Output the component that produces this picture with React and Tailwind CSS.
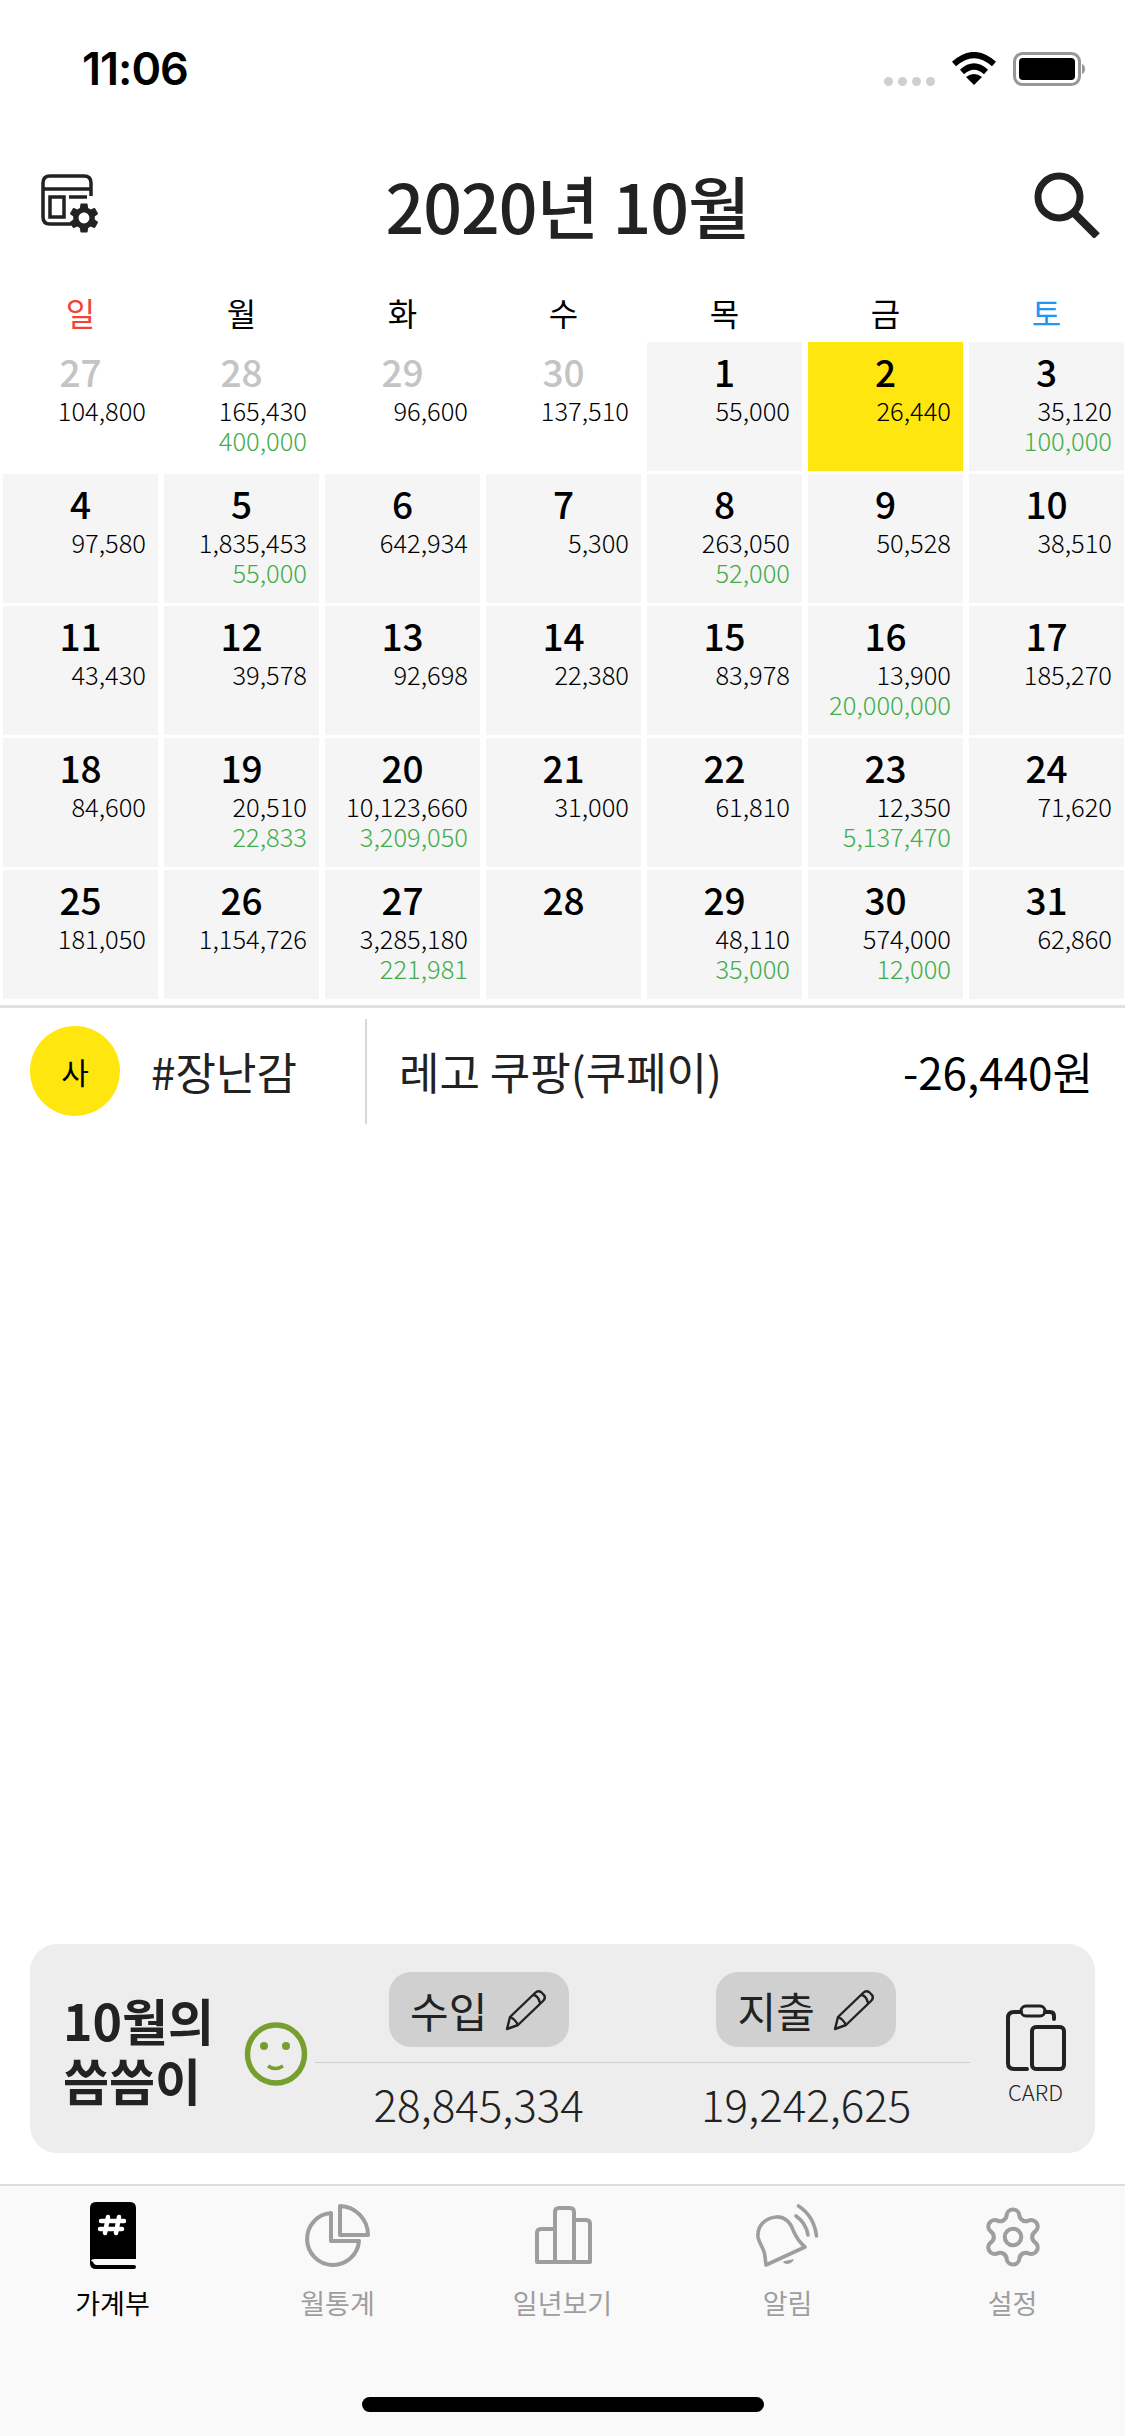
import React from "react";
import { Settings } from "lucide-react";

const weeks = [
  [
    { d: 27, a: "104,800", off: true },
    { d: 28, a: "165,430", i: "400,000", off: true },
    { d: 29, a: "96,600", off: true },
    { d: 30, a: "137,510", off: true },
    { d: 1, a: "55,000" },
    { d: 2, a: "26,440", on: true },
    { d: 3, a: "35,120", i: "100,000" },
  ],
  [
    { d: 4, a: "97,580" },
    { d: 5, a: "1,835,453", i: "55,000" },
    { d: 6, a: "642,934" },
    { d: 7, a: "5,300" },
    { d: 8, a: "263,050", i: "52,000" },
    { d: 9, a: "50,528" },
    { d: 10, a: "38,510" },
  ],
  [
    { d: 11, a: "43,430" },
    { d: 12, a: "39,578" },
    { d: 13, a: "92,698" },
    { d: 14, a: "22,380" },
    { d: 15, a: "83,978" },
    { d: 16, a: "13,900", i: "20,000,000" },
    { d: 17, a: "185,270" },
  ],
  [
    { d: 18, a: "84,600" },
    { d: 19, a: "20,510", i: "22,833" },
    { d: 20, a: "10,123,660", i: "3,209,050" },
    { d: 21, a: "31,000" },
    { d: 22, a: "61,810" },
    { d: 23, a: "12,350", i: "5,137,470" },
    { d: 24, a: "71,620" },
  ],
  [
    { d: 25, a: "181,050" },
    { d: 26, a: "1,154,726" },
    { d: 27, a: "3,285,180", i: "221,981" },
    { d: 28 },
    { d: 29, a: "48,110", i: "35,000" },
    { d: 30, a: "574,000", i: "12,000" },
    { d: 31, a: "62,860" },
  ],
];

const days = [
  { t: "일", c: "text-[#f44336]" },
  { t: "월", c: "text-black" },
  { t: "화", c: "text-black" },
  { t: "수", c: "text-black" },
  { t: "목", c: "text-black" },
  { t: "금", c: "text-black" },
  { t: "토", c: "text-[#2196f3]" },
];

function GearSetIcon() {
  return (
    <svg width="60" height="62" viewBox="0 0 60 62" fill="none" stroke="#222" strokeWidth="3.5">
      <path d="M34 50 H9 Q2 50 2 43 V9 Q2 2 9 2 H43 Q50 2 50 9 V22" />
      <path d="M2 15 H50" />
      <path d="M28 23 H46" />
      <rect x="9" y="23" width="14" height="20" />
      <svg x="25" y="26" width="36" height="36" viewBox="0 0 24 24">
        <path
          fill="#222"
          stroke="none"
          d="M19.14 12.94c.04-.3.06-.61.06-.94 0-.32-.02-.64-.07-.94l2.03-1.58c.18-.14.23-.41.12-.61l-1.92-3.32c-.12-.22-.37-.29-.59-.22l-2.39.96c-.5-.38-1.03-.7-1.62-.94l-.36-2.54c-.04-.24-.24-.41-.48-.41h-3.84c-.24 0-.43.17-.47.41l-.36 2.54c-.59.24-1.13.57-1.62.94l-2.39-.96c-.22-.08-.47 0-.59.22L2.74 8.87c-.12.21-.08.47.12.61l2.03 1.58c-.05.3-.09.63-.09.94s.02.64.07.94l-2.03 1.58c-.18.14-.23.41-.12.61l1.92 3.32c.12.22.37.29.59.22l2.39-.96c.5.38 1.03.7 1.62.94l.36 2.54c.05.24.24.41.48.41h3.84c.24 0 .44-.17.47-.41l.36-2.54c.59-.24 1.13-.56 1.62-.94l2.39.96c.22.08.47 0 .59-.22l1.92-3.32c.12-.22.07-.47-.12-.61l-2.01-1.58zM12 15.6c-1.98 0-3.6-1.62-3.6-3.6s1.62-3.6 3.6-3.6 3.6 1.62 3.6 3.6-1.62 3.6-3.6 3.6z"
        />
      </svg>
    </svg>
  );
}

function PencilIcon() {
  return (
    <svg width="42" height="42" viewBox="0 0 42 42" fill="none" stroke="#222" strokeWidth="2.4" strokeLinejoin="round">
      <path d="M2 40 L5 28 L30 4 Q33 1 36 3 L39 6 Q41 9 38 12 L13 36 Z" />
      <path d="M28 6 Q33 6 35 14" />
      <path d="M5 28 Q10 30 13 36" />
    </svg>
  );
}

function CardIcon() {
  return (
    <svg width="60" height="68" viewBox="0 0 60 68" fill="none" stroke="#222" strokeWidth="4" strokeLinecap="round">
      <rect x="26" y="24" width="32" height="42" rx="4" />
      <path d="M48 16 V13 Q48 9 44 9 H39" />
      <path d="M15 9 H8 Q2 9 2 15 V60 Q2 66 8 66 H21" />
      <rect x="15" y="3" width="24" height="10" rx="5" strokeWidth="3" />
    </svg>
  );
}

const gray = "#9e9e9e";

function BookIcon() {
  return (
    <svg width="70" height="70" viewBox="0 0 70 70">
      <path d="M20 0 H52 Q58 0 58 6 V57 H17 Q12 57 12 62 V6 Q12 0 18 0 Z" fill="#000" />
      <path d="M12 58 V61 Q12 67 18 67 H56 Q58 67 58 65 Q58 63 56 63 H18 Q16 63 15 60 Z" fill="#000" />
      <path d="M30 15 L27 31 M41 15 L38 31 M23 19 H46 M22 27 H44" stroke="#fff" strokeWidth="4.5" strokeLinecap="round" fill="none" />
    </svg>
  );
}

function PieIcon() {
  return (
    <svg width="70" height="70" viewBox="0 0 70 70" fill="none" stroke={gray} strokeWidth="4" strokeLinejoin="round">
      <path d="M28 11 A26 26 0 1 0 56 39 H28 Z" />
      <path d="M37 4 V33 H65 A29 29 0 0 0 37 4 Z" />
    </svg>
  );
}

function BarsIcon() {
  return (
    <svg width="70" height="70" viewBox="0 0 70 70" fill="none" stroke={gray} strokeWidth="4" strokeLinejoin="round">
      <path d="M9 60 V31 Q9 27 13 27 H27 V60 Z" />
      <path d="M27 60 V10 Q27 6 31 6 H42 Q46 6 46 10 V60 Z" />
      <path d="M46 18 H58 Q62 18 62 22 V60 H46" />
      <path d="M9 60 H62" />
    </svg>
  );
}

function BellIcon() {
  return (
    <svg width="70" height="70" viewBox="0 0 70 70" fill="none" stroke={gray} strokeWidth="3.6" strokeLinecap="round" strokeLinejoin="round">
      <path d="M13 63 L52 45 C46 40 43 35 40 28 C37 19 30 14 23 15 C12 16 4 24 5 35 C6 42 12 47 12 55 Z" />
      <path d="M31 60 Q36 63 40 58 Z" fill={gray} strokeWidth="1.5" />
      <path d="M43 14 Q53 21 55 33" />
      <path d="M45.5 4 Q61 14 63.5 34" />
    </svg>
  );
}

const tabs = [
  { label: "가계부", Icon: BookIcon, on: true },
  { label: "월통계", Icon: PieIcon },
  { label: "일년보기", Icon: BarsIcon },
  { label: "알림", Icon: BellIcon },
  {
    label: "설정",
    Icon: () => (
      <div className="w-[70px] h-[70px] flex items-center justify-center">
        <Settings size={66} color={gray} strokeWidth={1.5} />
      </div>
    ),
  },
];

function Cell({ cell }) {
  let bg = "bg-[#f5f5f5]";
  if (cell.off) bg = "bg-white";
  if (cell.on) bg = "bg-[#ffe60f]";

  return (
    <div className={`h-[129px] flex flex-col pt-[9px] ${bg}`}>
      <div className={`text-center text-[37px] leading-[40px] font-medium ${cell.off ? "text-[#c4c4c4]" : "text-black"}`}>
        {cell.d}
      </div>
      <div className="mt-[4px] pr-[12px] text-right text-[25.5px] leading-[30px] font-light text-black">{cell.a}</div>
      {cell.i && <div className="pr-[12px] text-right text-[25.5px] leading-[30px] font-light text-[#43ad4b]">{cell.i}</div>}
    </div>
  );
}

function Summary({ label, value }) {
  return (
    <div className="flex flex-col items-center w-[328px]">
      <div className="w-[180px] h-[75px] rounded-[22px] bg-[#d0d0d0] flex items-center justify-center gap-[18px] text-[#222] text-[42px] leading-none">
        <span>{label}</span>
        <PencilIcon />
      </div>
    </div>
  );
}

export default function App() {
  return (
    <div className="w-[1125px] h-[2436px] bg-white flex flex-col font-['Noto_Sans_CJK_KR','Noto_Sans',sans-serif] overflow-hidden">
      {/* status bar */}
      <div className="h-[150px] shrink-0 flex items-start justify-between pt-[44px] pl-[82px] pr-[40px]">
        <div className="font-['Inter',sans-serif] font-semibold text-[45px] leading-[50px] text-black tracking-[-1px]">11:06</div>
        <div className="flex items-center gap-[16px] pt-[8px]">
          <div className="flex items-center gap-[5px] mt-[24px]">
            <span className="w-[9px] h-[9px] rounded-full bg-[#cfcfcf]" />
            <span className="w-[9px] h-[9px] rounded-full bg-[#cfcfcf]" />
            <span className="w-[9px] h-[9px] rounded-full bg-[#cfcfcf]" />
            <span className="w-[9px] h-[9px] rounded-full bg-[#cfcfcf]" />
          </div>
          <svg width="46" height="34" viewBox="0 0 46 34" fill="none" stroke="#000" strokeWidth="6">
            <path d="M3 12 Q23 -6 43 12" />
            <path d="M11 20 Q23 9 35 20" />
            <path d="M23 33 L15 25 Q23 19 31 25 Z" fill="#000" stroke="none" />
          </svg>
          <svg width="72" height="34" viewBox="0 0 72 34" fill="none">
            <rect x="1.5" y="1.5" width="65" height="31" rx="8" stroke="#979797" strokeWidth="3" />
            <rect x="6" y="6" width="56" height="22" rx="4" fill="#000" />
            <path d="M69 12 Q72 13 72 17 Q72 21 69 22 Z" fill="#979797" />
          </svg>
        </div>
      </div>

      {/* header */}
      <div className="h-[110px] shrink-0 flex items-center justify-between pl-[41px] pr-[25px]">
        <GearSetIcon />
        <div className="text-[68px] leading-none font-medium text-[#222] tracking-[-1px]">2020년 10월</div>
        <svg width="66" height="66" viewBox="0 0 66 66" fill="none" stroke="#222" strokeWidth="7">
          <circle cx="25" cy="25" r="21" />
          <path d="M40 41 L63 64" strokeWidth="8" />
        </svg>
      </div>

      {/* weekdays */}
      <div className="h-[82px] shrink-0 pt-[22px] pl-[3px] pr-[1px] grid grid-cols-7 gap-x-[6px]">
        {days.map((day) => (
          <div key={day.t} className={`flex items-center justify-center text-[32px] leading-none ${day.c}`}>
            {day.t}
          </div>
        ))}
      </div>

      {/* calendar */}
      <div className="shrink-0 pl-[3px] pr-[1px] grid grid-cols-7 gap-x-[6px] gap-y-[3px]">
        {weeks.flat().map((cell, idx) => (
          <Cell key={idx} cell={cell} />
        ))}
      </div>

      {/* selected day */}
      <div className="mt-[6px] border-t-[3px] border-[#e2e2e2] h-[129px] shrink-0 flex items-center pl-[30px] pr-[32px]">
        <div className="w-[90px] h-[90px] rounded-full bg-[#ffe60f] flex items-center justify-center text-[30px] text-black">사</div>
        <div className="ml-[31px] w-[214px] text-[44px] leading-none text-[#222]">#장난감</div>
        <div className="w-[2px] h-[105px] bg-[#d8d8d8]" />
        <div className="ml-[32px] flex-1 text-[44px] leading-none text-[#222]">레고 쿠팡(쿠페이)</div>
        <div className="text-[44px] leading-none text-black">-26,440원</div>
      </div>

      <div className="flex-1" />

      {/* monthly summary */}
      <div className="mx-[30px] mb-[31px] h-[209px] shrink-0 rounded-[27px] bg-[#ededed] flex">
        <div className="w-[285px] pl-[33px] flex items-center gap-[30px]">
          <div className="text-[50px] leading-[60px] font-bold text-[#222] whitespace-nowrap">
            10월의
            <br />
            씀씀이
          </div>
          <svg className="mt-[10px] shrink-0" width="64" height="64" viewBox="0 0 64 64" fill="none" stroke="#779f2f" strokeWidth="5.5">
            <ellipse cx="32" cy="32" rx="28.5" ry="29" />
            <circle cx="20" cy="24" r="4" fill="#779f2f" stroke="none" />
            <circle cx="42" cy="24" r="4" fill="#779f2f" stroke="none" />
            <path d="M24 44 Q31 49 39 44" strokeWidth="3.5" />
          </svg>
        </div>
        <div className="w-[655px] flex flex-col pt-[28px]">
          <div className="flex">
            <Summary label="수입" />
            <Summary label="지출" />
          </div>
          <div className="mt-[15px] h-[1px] bg-[#cfcfcf]" />
          <div className="flex mt-[14px]">
            <div className="w-[328px] text-center text-[44px] leading-[52px] font-light text-[#222]">28,845,334</div>
            <div className="w-[328px] text-center text-[44px] leading-[52px] font-light text-[#222]">19,242,625</div>
          </div>
        </div>
        <div className="flex-1 flex flex-col items-center pt-[59px] pl-[6px]">
          <CardIcon />
          <div className="mt-[7px] text-[22px] leading-[26px] font-light text-[#222]">CARD</div>
        </div>
      </div>

      {/* tab bar */}
      <div className="h-[252px] shrink-0 border-t-[2px] border-[#dcdcdc] bg-[#f9f9f9] flex flex-col">
        <div className="flex pt-[16px]">
          {tabs.map((tab) => (
            <div key={tab.label} className="w-[225px] flex flex-col items-center">
              <tab.Icon />
              <div className={`mt-[14px] text-[27px] leading-[34px] ${tab.on ? "text-black" : "text-[#9e9e9e]"}`}>{tab.label}</div>
            </div>
          ))}
        </div>
        <div className="mt-[77px] mx-auto w-[402px] h-[15px] rounded-full bg-black" />
      </div>
    </div>
  );
}
